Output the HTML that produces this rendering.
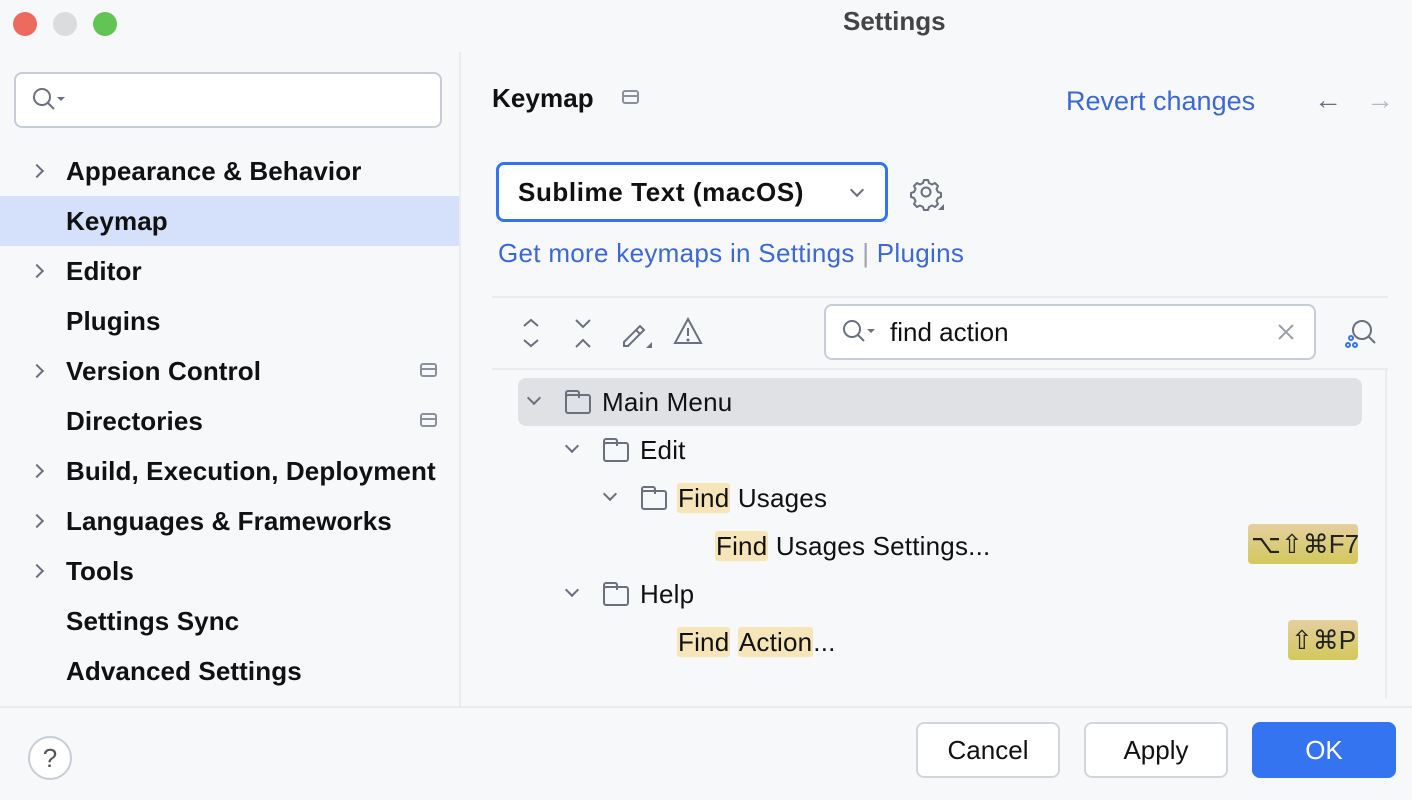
<!DOCTYPE html>
<html><head><meta charset="utf-8"><style>
*{box-sizing:border-box;margin:0;padding:0}
body{width:1412px;height:800px;background:#f7f8fa;font-family:"Liberation Sans",sans-serif;position:relative;overflow:hidden;color:#000}
.a{position:absolute}
.side{font-size:26px;font-weight:bold;color:#111;letter-spacing:0.1px}
.chev{position:absolute;width:10px;height:10px;border-right:2px solid #6c707e;border-bottom:2px solid #6c707e}
.r{transform:rotate(-45deg)}
.d{transform:rotate(45deg)}
.tree{font-size:26px;color:#111;position:absolute;letter-spacing:0.2px}
.hl{background:#f6e5b8;border-radius:3px;padding:0 1px}
.folder{position:absolute;width:26px;height:20px;border:2px solid #6c707e;border-radius:3px}
.folder:before{content:"";position:absolute;left:-2px;top:-6px;width:11px;height:6px;border:2px solid #6c707e;border-bottom:none;border-radius:3px 3px 0 0}
.key{position:absolute;background:linear-gradient(#e5cfa0,#d2c85a);border-radius:4px;font-size:26px;color:#222;padding:0 3px;height:40px;line-height:40px;text-align:right}
.btn{position:absolute;height:56px;border:2px solid #d3d5db;border-radius:8px;background:#fff;font-size:26px;text-align:center;line-height:52px;color:#111}
.tab{position:absolute;width:17px;height:14px;border:2px solid #8c909c;border-radius:3px}
.tab:after{content:"";position:absolute;left:0;right:0;top:3px;border-top:2px solid #8c909c}
</style></head><body>
<div class="a" style="left:13px;top:12px;width:24px;height:24px;border-radius:50%;background:#ed6a5e"></div>
<div class="a" style="left:53px;top:12px;width:24px;height:24px;border-radius:50%;background:#dcdcdc"></div>
<div class="a" style="left:93px;top:12px;width:24px;height:24px;border-radius:50%;background:#61c454"></div>
<div class="a" style="left:843px;top:6px;font-size:26px;font-weight:bold;color:#444">Settings</div>
<div class="a" style="left:459px;top:52px;width:2px;height:655px;background:#ebecf0"></div>
<div class="a" style="left:14px;top:72px;width:428px;height:56px;background:#fff;border:2px solid #c9ccd6;border-radius:8px"></div>
<svg class="a" style="left:32px;top:87px" width="40" height="26"><circle cx="10" cy="10" r="8" fill="none" stroke="#6c707e" stroke-width="2"/><path d="M16 16l6 6" stroke="#6c707e" stroke-width="2"/><path d="M25 10h8l-4 4z" fill="#6c707e"/></svg>
<div class="a" style="left:0;top:196px;width:459px;height:50px;background:#d5e1fb"></div>
<div class="chev r" style="left:32px;top:166px"></div>
<div class="a side" style="left:66px;top:156px">Appearance &amp; Behavior</div>
<div class="a side" style="left:66px;top:206px">Keymap</div>
<div class="chev r" style="left:32px;top:266px"></div>
<div class="a side" style="left:66px;top:256px">Editor</div>
<div class="a side" style="left:66px;top:306px">Plugins</div>
<div class="chev r" style="left:32px;top:366px"></div>
<div class="a side" style="left:66px;top:356px">Version Control</div>
<div class="tab" style="left:420px;top:363px"></div>
<div class="a side" style="left:66px;top:406px">Directories</div>
<div class="tab" style="left:420px;top:413px"></div>
<div class="chev r" style="left:32px;top:466px"></div>
<div class="a side" style="left:66px;top:456px">Build, Execution, Deployment</div>
<div class="chev r" style="left:32px;top:516px"></div>
<div class="a side" style="left:66px;top:506px">Languages &amp; Frameworks</div>
<div class="chev r" style="left:32px;top:566px"></div>
<div class="a side" style="left:66px;top:556px">Tools</div>
<div class="a side" style="left:66px;top:606px">Settings Sync</div>
<div class="a side" style="left:66px;top:656px">Advanced Settings</div>
<div class="a side" style="left:492px;top:83px">Keymap</div>
<div class="tab" style="left:622px;top:90px"></div>
<div class="a" style="left:1066px;top:86px;font-size:27px;color:#3b68d3">Revert changes</div>
<div class="a" style="left:1314px;top:84px;font-size:28px;color:#6c707e">←</div>
<div class="a" style="left:1366px;top:84px;font-size:28px;color:#b6b9c2">→</div>
<div class="a" style="left:496px;top:162px;width:392px;height:60px;background:#fff;border:3px solid #3574f0;border-radius:8px"></div>
<div class="a" style="left:518px;top:177px;font-size:26px;font-weight:bold;color:#111;letter-spacing:0.6px">Sublime Text (macOS)</div>
<div class="chev d" style="left:852px;top:185px"></div>
<svg class="a" style="left:910px;top:176px" width="36" height="36"><circle cx="16" cy="16" r="4.5" fill="none" stroke="#6c707e" stroke-width="2"/><path d="M14 4h4l1 3 3 1.5 3-1.5 3 3-1.5 3 1.5 3 3 1v4l-3 1-1.5 3 1.5 3-3 3-3-1.5-3 1.5-1 3h-4l-1-3-3-1.5-3 1.5-3-3 1.5-3-1.5-3-3-1v-4l3-1 1.5-3-1.5-3 3-3 3 1.5 3-1.5z" fill="none" stroke="#6c707e" stroke-width="2" stroke-linejoin="round"/><path d="M34 28v6h-6z" fill="#6c707e"/></svg>
<div class="a" style="left:498px;top:238px;font-size:26px;color:#3b68d3;letter-spacing:0.3px">Get more keymaps in Settings <span style="color:#9ba2b0">|</span> Plugins</div>
<div class="a" style="left:492px;top:296px;width:896px;height:2px;background:#ebecf0"></div>
<svg class="a" style="left:518px;top:316px" width="200" height="34"><g fill="none" stroke="#6c707e" stroke-width="2"><path d="M6 10l7-6 7 6M6 24l7 6 7-6"/><path d="M58 4l7 7 7-7M58 31l7-7 7 7"/><path d="M106 26l16-16 4 4-16 16h-4z M118 14l4 4"/><path d="M170 3l-13 24h26z M170 12v8"/></g><path d="M134 32v-6l-6 6z" fill="#6c707e"/><circle cx="170" cy="24" r="1.5" fill="#6c707e"/></svg>
<div class="a" style="left:824px;top:304px;width:492px;height:56px;background:#fff;border:2px solid #c9ccd6;border-radius:8px"></div>
<svg class="a" style="left:842px;top:319px" width="40" height="26"><circle cx="10" cy="10" r="8" fill="none" stroke="#6c707e" stroke-width="2"/><path d="M16 16l6 6" stroke="#6c707e" stroke-width="2"/><path d="M25 10h8l-4 4z" fill="#6c707e"/></svg>
<div class="a" style="left:890px;top:317px;font-size:26px;color:#111">find action</div>
<svg class="a" style="left:1276px;top:322px" width="20" height="20"><path d="M3 3l14 14M17 3L3 17" stroke="#9ba0ab" stroke-width="2"/></svg>
<svg class="a" style="left:1344px;top:318px" width="34" height="32"><circle cx="18" cy="12" r="9" fill="none" stroke="#6c707e" stroke-width="2"/><path d="M24 18l7 7" stroke="#6c707e" stroke-width="2"/><g fill="none" stroke="#3574f0" stroke-width="2"><circle cx="7" cy="20" r="2"/><circle cx="4" cy="27" r="2"/><circle cx="11" cy="27" r="2"/></g></svg>
<div class="a" style="left:492px;top:368px;width:896px;height:2px;background:#ebecf0"></div>
<div class="a" style="left:1385px;top:368px;width:2px;height:330px;background:#ebecf0"></div>
<div class="a" style="left:518px;top:378px;width:844px;height:48px;background:#dfe1e5;border-radius:8px"></div>
<div class="chev d" style="left:529px;top:393px"></div>
<div class="folder" style="left:565px;top:394px"></div>
<div class="tree" style="left:602px;top:387px">Main Menu</div>
<div class="chev d" style="left:567px;top:441px"></div>
<div class="folder" style="left:603px;top:442px"></div>
<div class="tree" style="left:640px;top:435px">Edit</div>
<div class="chev d" style="left:605px;top:489px"></div>
<div class="folder" style="left:641px;top:490px"></div>
<div class="tree" style="left:677px;top:483px"><span class="hl">Find</span> Usages</div>
<div class="tree" style="left:715px;top:531px"><span class="hl">Find</span> Usages Settings...</div>
<div class="key" style="left:1248px;top:524px;width:110px">⌥⇧⌘F7</div>
<div class="chev d" style="left:567px;top:585px"></div>
<div class="folder" style="left:603px;top:586px"></div>
<div class="tree" style="left:640px;top:579px">Help</div>
<div class="tree" style="left:677px;top:627px"><span class="hl">Find</span> <span class="hl">Action</span>...</div>
<div class="key" style="left:1288px;top:620px;width:70px">⇧⌘P</div>
<div class="a" style="left:0;top:706px;width:1412px;height:2px;background:#ebecf0"></div>
<div class="a" style="left:28px;top:736px;width:44px;height:44px;border:2px solid #c9ccd6;border-radius:50%;background:#fff;text-align:center;font-size:26px;line-height:40px;color:#555">?</div>
<div class="btn" style="left:916px;top:722px;width:144px">Cancel</div>
<div class="btn" style="left:1084px;top:722px;width:144px">Apply</div>
<div class="btn" style="left:1252px;top:722px;width:144px;background:#3574f0;border-color:#3574f0;color:#fff">OK</div>
</body></html>
